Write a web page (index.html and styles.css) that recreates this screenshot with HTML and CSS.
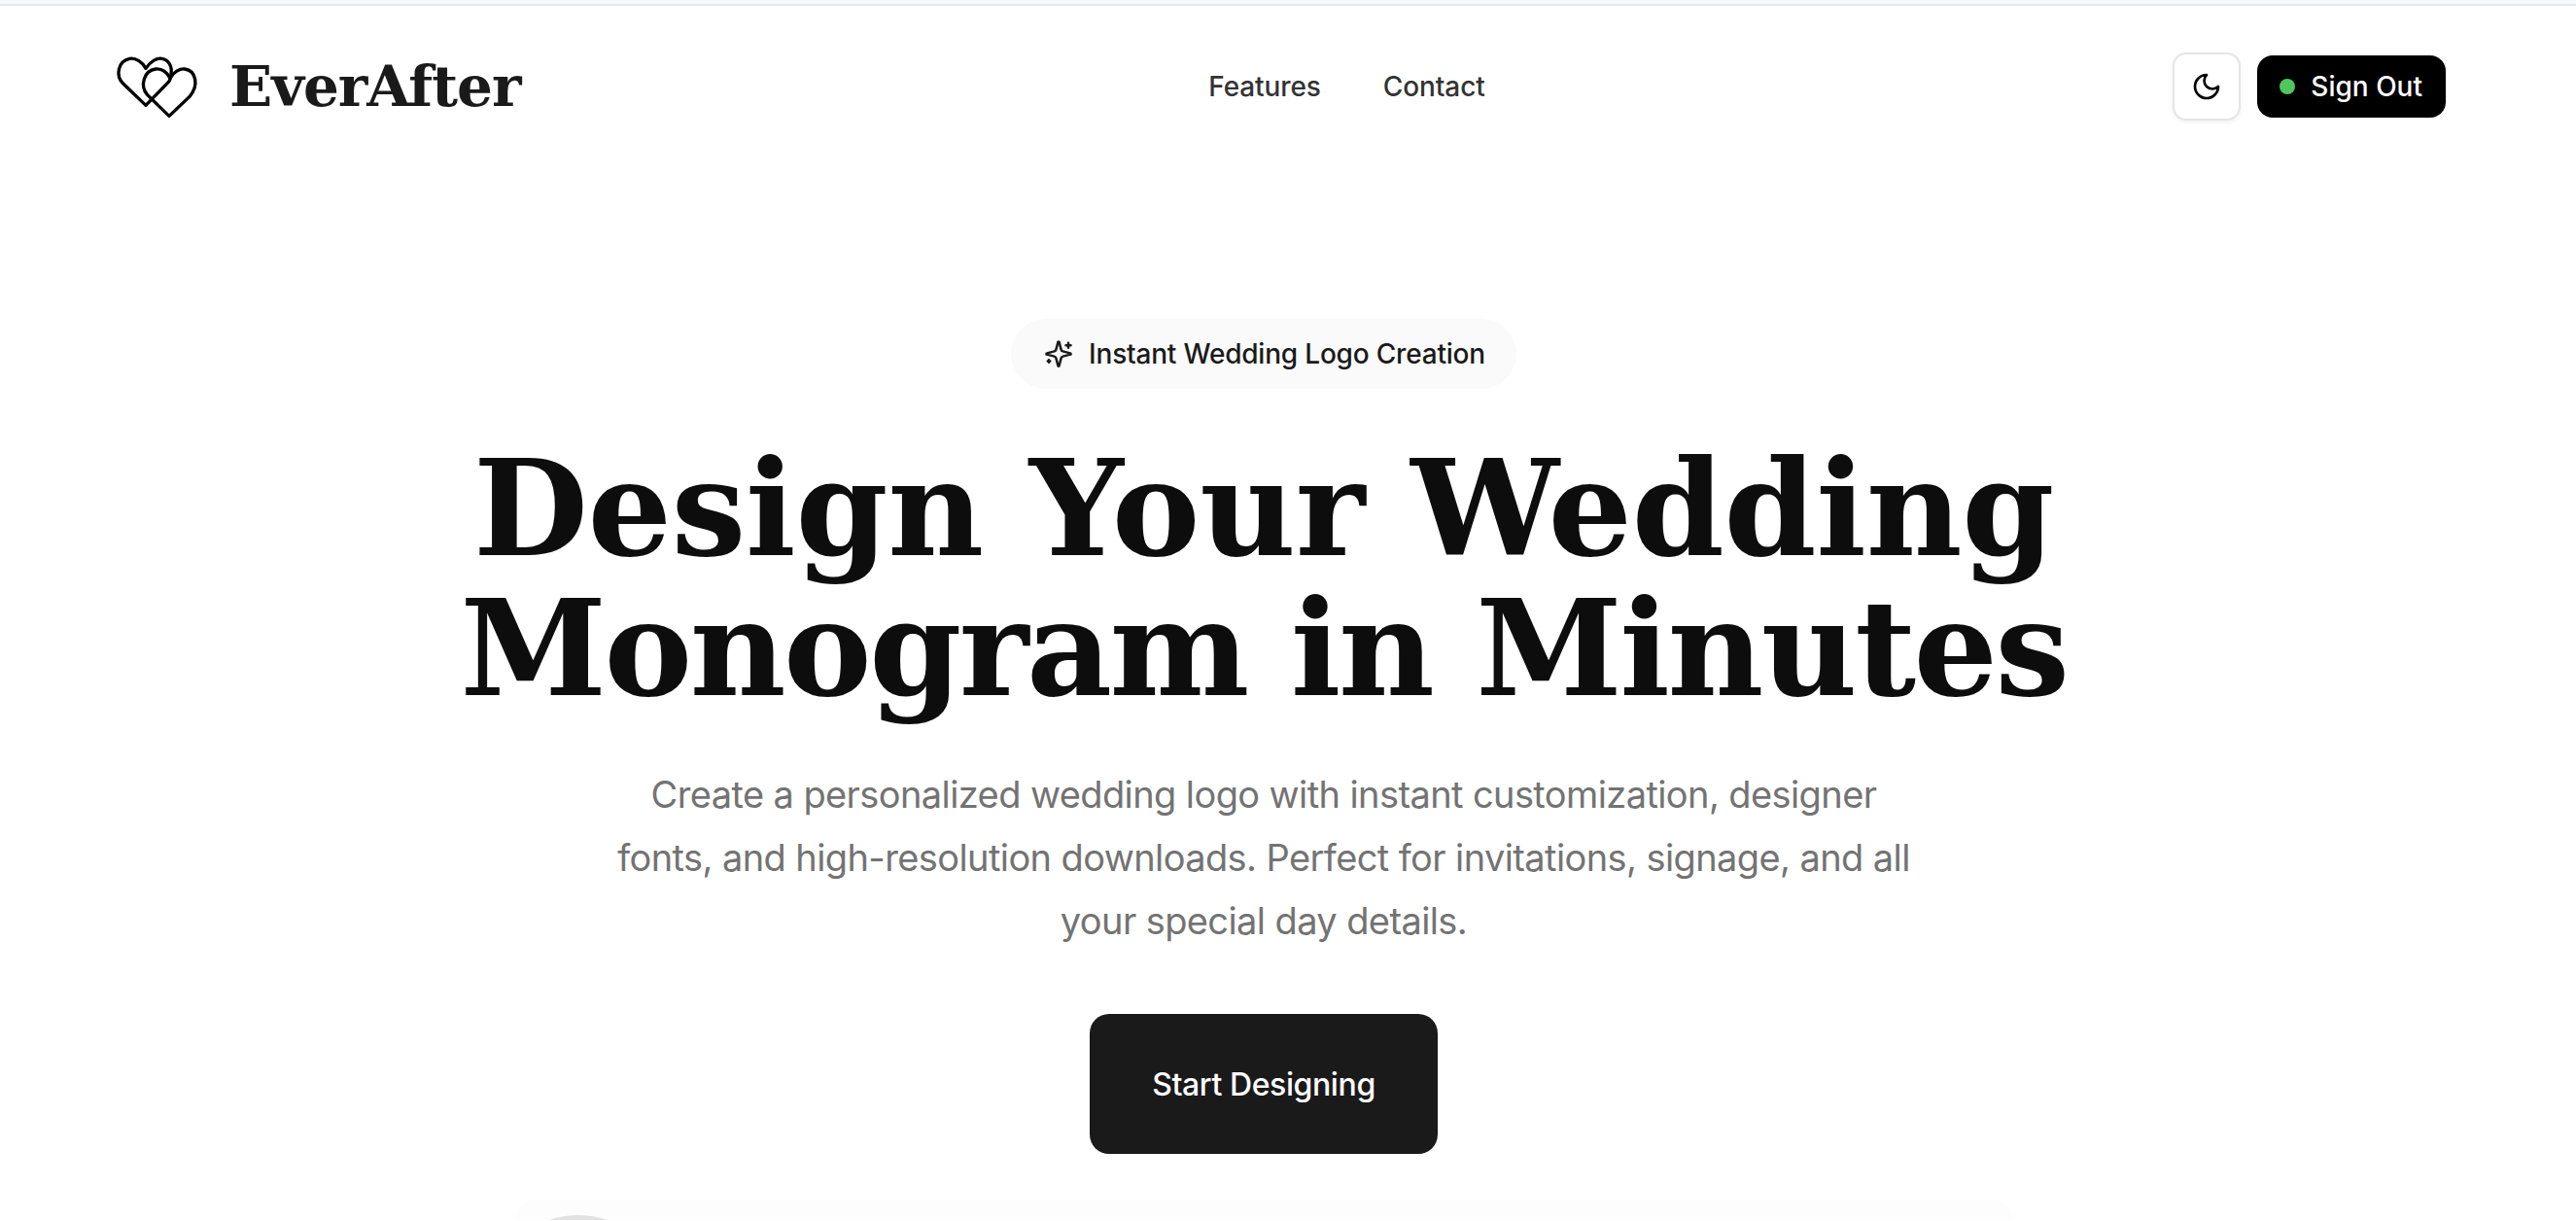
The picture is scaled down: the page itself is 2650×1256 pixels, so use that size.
FILE: index.html
```html
<!DOCTYPE html>
<html lang="en">
<head>
  <meta charset="UTF-8">
  <title>EverAfter</title>
  <link rel="stylesheet" href="styles.css">
</head>
<body>
  <div class="top-strip"></div>

  <header class="site-header">
    <a class="brand" href="#">
      <svg class="brand-icon" viewBox="0 0 300 225" fill="none" stroke="#000" stroke-width="10" stroke-linejoin="round">
        <path d="M120 172 L50 105 C25 80 35 35 70 28 C90 25 110 40 120 58 C135 35 155 25 170 28 C190 32 202 50 198 75 C197 88 195 95 190 100 Z"/>
        <path d="M192 205 L125 140 C100 110 115 65 150 60 C170 58 185 70 195 88 C205 70 225 58 240 60 C275 65 285 110 255 145 Z"/>
      </svg>
      <span class="brand-name">EverAfter</span>
    </a>

    <nav class="main-nav">
      <a href="#">Features</a>
      <a href="#">Contact</a>
    </nav>

    <div class="header-actions">
      <button class="theme-btn">
        <svg viewBox="0 0 24 24" fill="none" stroke="#000" stroke-width="2" stroke-linecap="round" stroke-linejoin="round">
          <path d="M12 3a6 6 0 0 0 9 9 9 9 0 1 1-9-9Z"/>
        </svg>
      </button>
      <button class="signout-btn"><span class="status-dot"></span>Sign Out</button>
    </div>
  </header>

  <main class="hero">
    <div class="hero-badge">
      <svg viewBox="0 0 24 24" fill="none" stroke="#1a1a1a" stroke-width="2" stroke-linecap="round" stroke-linejoin="round">
        <path d="M9.900 15.500A2 2 0 0 0 8.500 14.100L2.400 12.500a.5.5 0 0 1 0-1l6.100-1.600A2 2 0 0 0 9.900 8.500l1.600-6.100a.5.5 0 0 1 1 0l1.600 6.100a2 2 0 0 0 1.400 1.400l6.100 1.600a.5.5 0 0 1 0 1l-6.100 1.600a2 2 0 0 0-1.400 1.400l-1.600 6.100a.5.5 0 0 1-1 0Z"/>
        <path d="M20 3v4M22 5h-4M4 17v2M5 18H3"/>
      </svg>
      <span>Instant Wedding Logo Creation</span>
    </div>

    <h1 class="hero-title"><span class="title-wide">Design Your Wedding</span><br>Monogram in Minutes</h1>

    <p class="hero-text">Create a personalized wedding logo with instant customization, designer fonts, and high-resolution downloads. Perfect for invitations, signage, and all your special day details.</p>

    <button class="cta-btn">Start Designing</button>

    <div class="preview-card">
      <span class="preview-ring"></span>
    </div>
  </main>
</body>
</html>
```

FILE: styles.css
```css
:root {
  --ink: #1a1a1a;
  --muted: #737373;
  --soft: #fafafa;
}

body {
  margin: 0;
  background: #fff;
  color: var(--ink);
  font-family: Inter, "Noto Sans", sans-serif;
}

.top-strip {
  height: 6px;
  background: #f5f9fc;
  border-bottom: 2px solid #e2e8ee;
  box-sizing: border-box;
}

.site-header {
  display: flex;
  align-items: center;
  justify-content: space-between;
  padding: 45px 134px 0 110px;
}

.brand {
  display: flex;
  align-items: center;
  gap: 26px;
  color: var(--ink);
  text-decoration: none;
}

.brand-icon {
  width: 100px;
  height: 75px;
}

.brand-name {
  font-family: "DejaVu Serif", "Liberation Serif", serif;
  font-size: 58px;
  font-weight: 700;
  letter-spacing: -1px;
  line-height: 68px;
}

.main-nav {
  display: flex;
  gap: 64px;
}

.main-nav a {
  color: #333;
  font-size: 28px;
  font-weight: 500;
  letter-spacing: -0.1px;
  text-decoration: none;
}

.header-actions {
  display: flex;
  align-items: center;
  gap: 17px;
}

.theme-btn {
  display: flex;
  align-items: center;
  justify-content: center;
  width: 70px;
  height: 70px;
  padding: 0;
  background: #fff;
  border: 2px solid #e5e5e5;
  border-radius: 14px;
  box-shadow: 0 2px 4px rgba(0, 0, 0, 0.06);
}

.theme-btn svg {
  width: 32px;
  height: 32px;
}

.signout-btn {
  display: flex;
  align-items: center;
  gap: 16px;
  height: 64px;
  padding: 0 24px 0 23px;
  background: #000;
  color: #fff;
  border: none;
  border-radius: 16px;
  font-family: inherit;
  font-size: 28px;
  font-weight: 500;
}

.status-dot {
  width: 16px;
  height: 16px;
  border-radius: 50%;
  background: #4fc75d;
}

.hero {
  display: flex;
  flex-direction: column;
  align-items: center;
  width: 2600px;
  padding-top: 202px;
}

.hero-badge {
  display: flex;
  align-items: center;
  gap: 16px;
  height: 72px;
  padding: 0 32px 0 34px;
  background: var(--soft);
  border-radius: 36px;
  font-size: 28px;
  font-weight: 500;
  letter-spacing: -0.2px;
}

.hero-badge svg {
  width: 30px;
  height: 30px;
}

.hero-title {
  margin: 51px 0 0;
  font-family: "DejaVu Serif", "Liberation Serif", serif;
  font-size: 136px;
  font-weight: 700;
  line-height: 144px;
  letter-spacing: -2.5px;
  text-align: center;
  color: #0d0d0d;
}

.title-wide {
  letter-spacing: -0.3px;
}

.hero-text {
  width: 1340px;
  margin: 46px 0 0;
  color: var(--muted);
  font-size: 38px;
  letter-spacing: -0.6px;
  line-height: 65px;
  text-align: center;
}

.cta-btn {
  width: 358px;
  height: 144px;
  margin-top: 63px;
  background: var(--ink);
  color: #fff;
  border: none;
  border-radius: 20px;
  font-family: inherit;
  font-size: 32px;
  font-weight: 500;
  letter-spacing: -0.4px;
}

.preview-card {
  position: relative;
  width: 1540px;
  height: 21px;
  margin-top: 47px;
  overflow: hidden;
  background: #fdfdfd;
  border-radius: 64px 64px 0 0;
}

.preview-ring {
  position: absolute;
  top: 16px;
  left: -27px;
  width: 172px;
  height: 172px;
  border: 6px solid #e2e2e2;
  border-radius: 50%;
}
```
